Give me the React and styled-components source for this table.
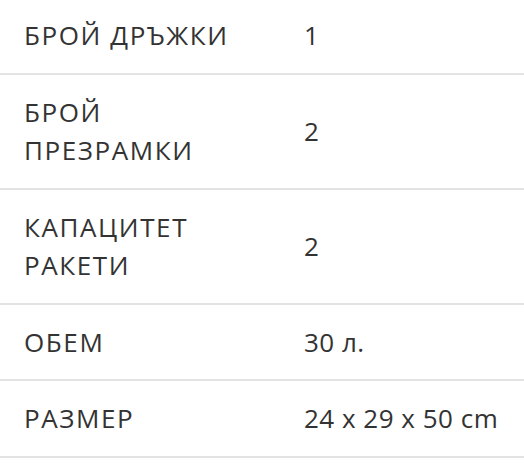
import React from "react";
import styled, { createGlobalStyle } from "styled-components";

const GlobalStyle = createGlobalStyle`
  html, body { margin: 0; padding: 0; background: #ffffff; }
  body { font-family: "Open Sans", "Noto Sans", sans-serif; }
`;

const Table = styled.div`
  width: 524px;
  margin-top: -2px;
  display: flex;
  flex-direction: column;
`;

const Row = styled.div`
  display: grid;
  grid-template-columns: 280px 1fr;
  align-items: center;
  border-bottom: 2px solid #e3e3e3;
  padding: 18px 0;
`;

const Cell = styled.div`
  padding: 0 24px;
  font-size: 26px;
  line-height: 38.5px;
  color: #333333;
`;

const Label = styled(Cell)`
  text-transform: uppercase;
  letter-spacing: 1.6px;
`;

const Value = styled(Cell)`
  white-space: nowrap;
  letter-spacing: 0.5px;
`;

const rows = [
  ["БРОЙ ДРЪЖКИ", "1"],
  ["БРОЙ ПРЕЗРАМКИ", "2"],
  ["КАПАЦИТЕТ РАКЕТИ", "2"],
  ["ОБЕМ", "30 л."],
  ["РАЗМЕР", "24 x 29 x 50 cm"],
];

export default function App() {
  return (
    <>
      <GlobalStyle />
      <Table>
        {rows.map(([k, v]) => (
          <Row key={k}>
            <Label>{k}</Label>
            <Value>{v}</Value>
          </Row>
        ))}
      </Table>
    </>
  );
}
